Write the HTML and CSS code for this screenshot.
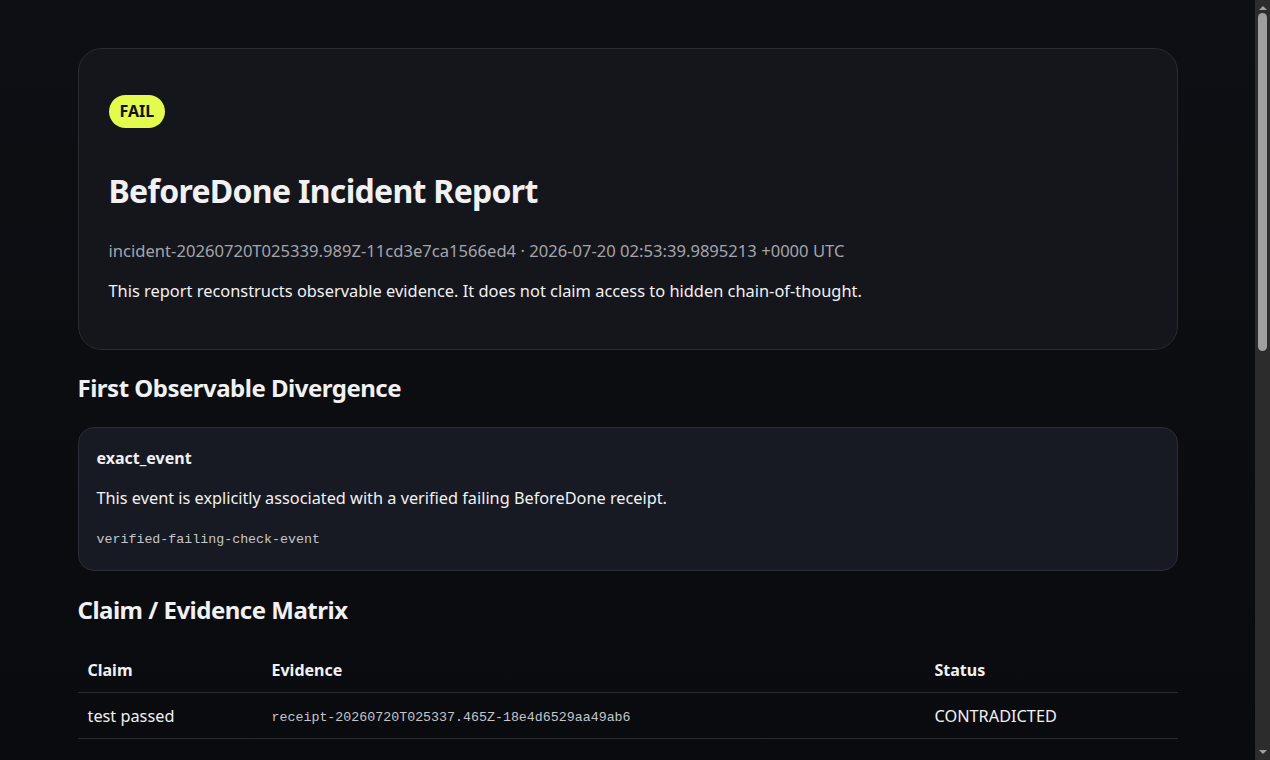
FILE: index.html
```html
<!DOCTYPE html>
<html lang="en">
<head>
    <meta charset="UTF-8">
    <title>BeforeDone Incident Report</title>
    <link rel="stylesheet" href="styles.css">
</head>
<body>

    <main class="page">
        <header class="hero">
            <span class="badge">FAIL</span>
            <h1>BeforeDone Incident Report</h1>
            <p class="meta">incident-20260720T025339.989Z-11cd3e7ca1566ed4 · 2026-07-20 02:53:39.9895213 +0000 UTC</p>
            <p class="note">This report reconstructs observable evidence. It does not claim access to hidden chain-of-thought.</p>
        </header>

        <h2>First Observable Divergence</h2>
        <section class="card">
            <div class="card-title">exact_event</div>
            <p class="card-text">This event is explicitly associated with a verified failing BeforeDone receipt.</p>
            <code>verified-failing-check-event</code>
        </section>

        <h2>Claim / Evidence Matrix</h2>
        <table class="matrix">
            <thead>
                <tr>
                    <th class="col-claim">Claim</th>
                    <th>Evidence</th>
                    <th class="col-status">Status</th>
                </tr>
            </thead>
            <tbody>
                <tr>
                    <td>test passed</td>
                    <td><code>receipt-20260720T025337.465Z-18e4d6529aa49ab6</code></td>
                    <td>CONTRADICTED</td>
                </tr>
            </tbody>
        </table>
    </main>

    <div class="scrollbar">
        <span class="arrow up"></span>
        <span class="thumb"></span>
        <span class="arrow down"></span>
    </div>

</body>
</html>
```

FILE: styles.css
```css
html { background: #0b0c10; }
body { margin: 0; padding: 48px 39px 60px 24px; font-family: "Noto Sans", "Open Sans", sans-serif; color: #f1f1f3; background: linear-gradient(180deg, #0e0f14 0%, #0a0b0e 760px); min-height: 1780px; box-sizing: border-box; }
.page { max-width: 1100px; margin: 0 auto; }

.hero { background: #15161c; border: 1px solid #2a2c33; border-radius: 24px; padding: 46px 30px 46px; }
.badge { display: inline-block; background: #e2fb4c; color: #111; font-weight: 700; font-size: 16px; line-height: 33px; padding: 0 11px; border-radius: 17px; }
.hero h1 { margin: 41px 0 0; font-size: 32px; line-height: 43px; font-weight: 700; letter-spacing: -0.7px; }
.meta { margin: 27px 0 0; color: #a3a5ad; font-size: 16.6px; line-height: 24px; }
.note { margin: 16px 0 0; font-size: 16.4px; line-height: 24px; }

h2 { margin: 23px 0 23px; font-size: 24px; line-height: 32px; font-weight: 700; letter-spacing: -0.5px; }
.hero + h2 { margin-top: 22px; }
.card + h2 { margin-bottom: 22px; }

.card { background: #171a22; border: 1px solid #2a2e37; border-radius: 16px; padding: 18px 18px 20px; }
.card-title { font-weight: 700; font-size: 16px; line-height: 24px; }
.card-text { margin: 16px 0 0; font-size: 16.3px; line-height: 24px; }
.card code { display: block; margin-top: 20px; }
code { font-family: "Liberation Mono", "DejaVu Sans Mono", monospace; font-size: 13.3px; line-height: 20px; color: #c4c6cc; }

.matrix { width: 100%; border-collapse: collapse; font-size: 16.3px; }
.matrix th { text-align: left; font-weight: 700; font-size: 16px; padding: 10px; line-height: 24px; border-bottom: 1px solid #2a2c33; }
.matrix td { padding: 10px 10px 10px; line-height: 24px; border-bottom: 1px solid #2a2c33; }
.col-claim { width: 164px; }
.col-status { width: 233px; }

/* imitation of the window scrollbar */
.scrollbar { position: fixed; top: 0; right: 0; width: 15px; height: 100vh; background: #2c2c2c; display: flex; flex-direction: column; align-items: center; }
.thumb { width: 9px; height: 338px; margin-top: 3px; background: #9f9f9f; border-radius: 5px; }
.arrow { width: 0; height: 0; border-left: 4px solid transparent; border-right: 4px solid transparent; }
.arrow.up { margin-top: 6px; border-bottom: 4px solid #a0a0a0; }
.arrow.down { margin-top: auto; margin-bottom: 6px; border-top: 4px solid #a0a0a0; }
```
